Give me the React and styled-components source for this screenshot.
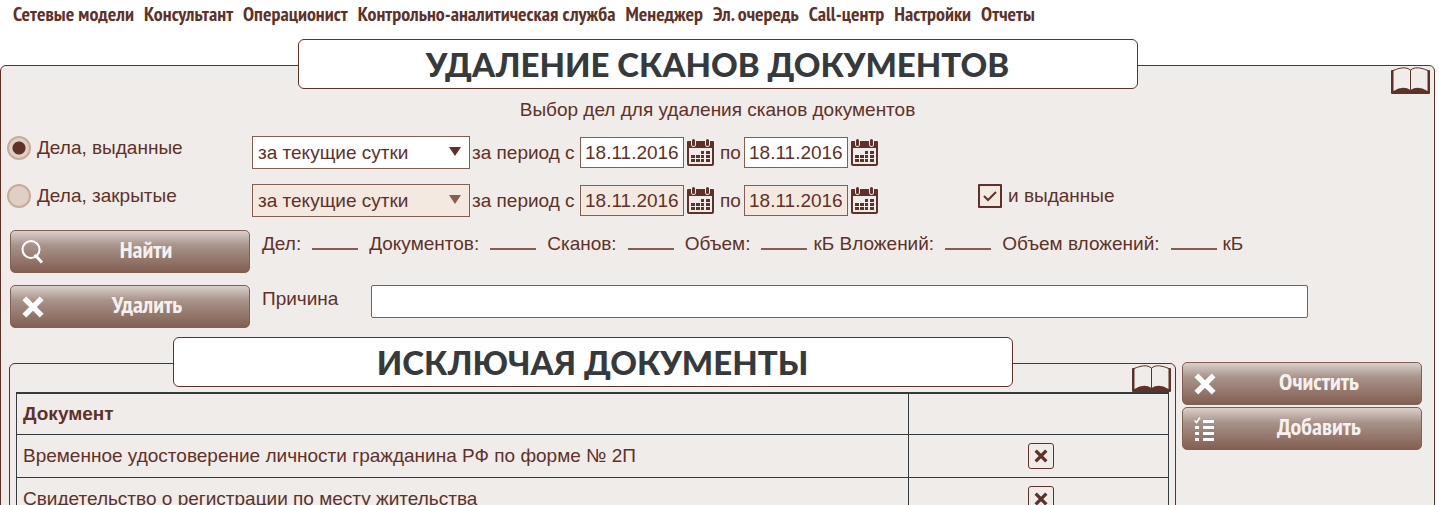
import React, { useState } from 'react';
import styled, { createGlobalStyle } from 'styled-components';

const GlobalStyle = createGlobalStyle`
  * {
    box-sizing: border-box;
  }
  body {
    margin: 0;
    background: #fff;
    color: #5e3228;
    font: 19px/24px "Liberation Sans", Arial, sans-serif;
  }
  button, input, select {
    font: inherit;
    color: inherit;
  }
`

const narrow = '"PT Sans Narrow", "Liberation Sans Narrow", "Open Sans Condensed", "Roboto Condensed", "Noto Sans", sans-serif'

const Nav = styled.nav`
  display: flex;
  flex-wrap: wrap;
  gap: 0 10px;
  padding: 2px 13px 13px;
`

const NavLink = styled.a`
  color: #5e3228;
  font: bold 20px/24px ${narrow};
  text-decoration: none;
  white-space: nowrap;
`

const Panel = styled.section`
  position: relative;
  flex: 1;
  min-width: 0;
  margin-top: 26px;
  padding: 0 6px 8px;
  background: #f0ece9;
  border: 1px solid #5e3228;
  border-radius: 6px;
`

const Page = styled(Panel)`
  margin-right: 4px;
`

const Title = styled.h2`
  max-width: 840px;
  height: 50px;
  margin: -27px auto 5px;
  background: #fff;
  border: 1px solid #5e3228;
  border-radius: 6px;
  color: #373a3c;
  font: 900 33px/48px Lato, sans-serif;
  text-align: center;
  text-transform: uppercase;
`

const HelpButton = styled.button`
  position: absolute;
  top: 1px;
  right: 4px;
  display: flex;
  padding: 0;
  border: 0;
  background: none;
`

const Subtitle = styled.p`
  margin: 9px 0 14px;
  text-align: center;
`

const Filters = styled.div`
  display: flex;
  flex-direction: column;
  gap: 15px;
  margin-bottom: 13px;
`

const FilterRow = styled.div`
  display: flex;
  align-items: flex-start;
  height: 33px;
`

const Choice = styled.label`
  display: flex;
  gap: 6px;
  width: ${props => props.$width || 'auto'};
`

const Radio = styled.input`
  appearance: none;
  width: 24px;
  height: 24px;
  margin: 0;
  border: 2px solid #c7ac9c;
  border-radius: 50%;
  background: #dfcfc4;
  &:checked {
    background: radial-gradient(circle, #5e3228 6px, #dfcfc4 7px);
  }
`

const Period = styled.div`
  display: flex;
  align-items: center;
  height: 33px;
  margin-right: 94px;
`

const Word = styled.span`
  min-width: ${props => props.$width};
`

const SelectBox = styled.div`
  position: relative;
  width: 218px;
  margin-right: 2px;
  svg {
    position: absolute;
    top: 11px;
    right: 9px;
    pointer-events: none;
    opacity: ${props => (props.$off ? 0.75 : 1)};
  }
`

const Select = styled.select`
  appearance: none;
  display: block;
  width: 100%;
  height: 33px;
  padding: 0 5px;
  border: 1px solid #835f52;
  border-radius: 0;
  background: #fff;
  opacity: 1;
  &:disabled {
    background: #f4e9e0;
  }
`

const DateInput = styled.input`
  width: 104px;
  height: 31px;
  margin: 0 3px;
  padding: 0 4px;
  border: 1px solid #835f52;
  background: #fff;
  &:disabled {
    background: #f4e9e0;
  }
`

const CalendarButton = styled.button`
  display: flex;
  margin-right: 6px;
  padding: 0;
  border: 0;
  background: none;
`

const CheckBox = styled.span`
  position: relative;
  display: flex;
  svg {
    position: absolute;
    top: 6px;
    left: 5px;
    pointer-events: none;
  }
  input {
    appearance: none;
    width: 24px;
    height: 24px;
    margin: 0;
    border: 2px solid #5e3228;
    border-radius: 1px;
    background: #f4e9e0;
  }
`

const ActionRow = styled.div`
  display: flex;
  align-items: flex-start;
  gap: 12px;
  margin: 0 3px 12px;
`

const Button = styled.button`
  display: flex;
  flex: none;
  align-items: center;
  width: 240px;
  height: 43px;
  padding: 0 9px;
  border: 1px solid #835f52;
  border-radius: 5px;
  background: linear-gradient(#d9d0cb, #a8938a 35%, #835f52);
  color: #f5f1ef;
  font: bold 24px/24px ${narrow};
  span {
    flex: 1;
    padding: 0 0 4px 8px;
  }
`

const Stats = styled.div`
  display: flex;
  flex-wrap: wrap;
  padding-top: 2px;
`

const Stat = styled.span`
  white-space: nowrap;
  margin-right: 11px;
`

const Value = styled.output`
  width: 46px;
  height: 18px;
  margin-right: ${props => (props.$unit ? '6px' : '11px')};
  border-bottom: 2px solid #835f52;
`

const Reason = styled.label`
  display: flex;
  flex: 1;
  margin-right: 117px;
  span {
    width: 109px;
    padding-top: 2px;
  }
  input {
    flex: 1;
    min-width: 0;
    height: 33px;
    padding: 0 5px;
    border: 1px solid #835f52;
    border-radius: 2px;
    background: #fff;
  }
`

const Lower = styled.div`
  display: flex;
  align-items: flex-start;
  gap: 6px;
  margin: -3px 6px 0 2px;
`

const SideButtons = styled.div`
  display: flex;
  flex-direction: column;
  gap: 2px;
  margin-top: 25px;
`

const Table = styled.table`
  width: 100%;
  border-collapse: collapse;
  border: 1px solid #373a3c;
  border-top-width: 2px;
  th, td {
    height: 43px;
    padding: 0 6px;
    border: 1px solid #373a3c;
    text-align: left;
  }
  th {
    height: 41px;
    border-top-width: 2px;
  }
  th:last-child, td:last-child {
    width: 260px;
    padding-left: 10px;
  }
`

const RemoveButton = styled.button`
  display: flex;
  align-items: center;
  justify-content: center;
  width: 26px;
  height: 26px;
  margin: 0 auto;
  padding: 0;
  border: 1px solid #5e3228;
  border-radius: 3px;
  background: #f0ece9;
`

const BookIcon = () => (
  <svg width="39" height="27" viewBox="0 0 39 27">
    <path d="M0 4Q0 3 1 3H38Q39 3 39 4V26Q39 27 38 27H1Q0 27 0 26Z" fill="#5e3228" />
    <path d="M2.5 24V3.5Q6 2 8 1.500Q15-.5 19.500 3Q24-.5 31 1.500Q33 2 36.500 3.500V24Q27 18 19.500 23Q12 18 2.500 24Z" fill="#f0ece9" />
    <path d="M2 3.500Q6 2 8 1.500Q15-.5 19.500 3Q24-.5 31 1.500Q33 2 37 3.500M19.500 3V24" fill="none" stroke="#5e3228" />
  </svg>
)

const CalendarIcon = () => (
  <svg width="27" height="27" viewBox="0 0 27 27">
    <rect x="1" y="4" width="25" height="22" rx="1" fill="#f0ece9" stroke="#5e3228" strokeWidth="2" />
    <path d="M0 3Q0 2 1 2H26Q27 2 27 3V9H0Z" fill="#5e3228" />
    <path d="M4 1H5V5Q5 7 6.500 7T8 5V1H9V5Q9 8 6.500 8T4 5ZM18 1H19V5Q19 7 20.500 7T22 5V1H23V5Q23 8 20.500 8T18 5Z" fill="#f0ece9" />
    <path d="M5 1.500Q5 0 6.500 0T8 1.500V5Q8 7 6.500 7T5 5ZM19 1.500Q19 0 20.500 0T22 1.500V5Q22 7 20.500 7T19 5Z" fill="#5e3228" />
    <path d="M14 12h3v3h-3zM19 12h4v3h-4zM4 16h4v3H4zM9 16h4v3H9zM14 16h3v3h-3zM19 16h4v3h-4zM4 20h4v3H4zM9 20h4v3H9zM14 20h3v3h-3zM19 20h4v3h-4z" fill="#5e3228" />
  </svg>
)

const SearchIcon = () => (
  <svg width="24" height="24" viewBox="0 0 24 24" fill="none" stroke="#fff">
    <circle cx="11" cy="9.500" r="8.500" strokeWidth="2" />
    <path d="M14.500 17L17 15M15.500 15.500L22 22.500" strokeWidth="3" />
  </svg>
)

const CrossIcon = ({ size = 26, color = '#fff' }) => (
  <svg width={size} height={size} viewBox="0 0 24 24">
    <path d="M4 4L20 20M20 4L4 20" stroke={color} strokeWidth="5" />
  </svg>
)

const ListIcon = () => (
  <svg width="26" height="24" viewBox="0 0 26 24">
    <path d="M11 3h11v3H11zM11 9h11v3H11zM11 15h11v3H11zM11 21h11v3H11zM3 9h4v3H3zM3 15h4v3H3zM3 21h4v3H3z" fill="#fff" />
    <path d="M2.500 3.500L4.500 5.500L8 0.500" fill="none" stroke="#fff" strokeWidth="1.500" />
  </svg>
)

const links = [
  'Сетевые модели',
  'Консультант',
  'Операционист',
  'Контрольно-аналитическая служба',
  'Менеджер',
  'Эл. очередь',
  'Call-центр',
  'Настройки',
  'Отчеты',
]

const stats = [
  { name: 'Дел:' },
  { name: 'Документов:' },
  { name: 'Сканов:' },
  { name: 'Объем:', unit: true },
  { name: 'кБ Вложений:' },
  { name: 'Объем вложений:', unit: true },
]

const documents = [
  'Временное удостоверение личности гражданина РФ по форме № 2П',
  'Свидетельство о регистрации по месту жительства',
]

const Filter = ({ label, value, kind, onPick, children }) => {
  const off = kind !== value
  return (
    <FilterRow>
      <Choice $width="245px">
        <Radio type="radio" name="kind" checked={!off} onChange={() => onPick(value)} />
        {label}
      </Choice>
      <Period>
        <SelectBox $off={off}>
          <Select aria-label="Период" disabled={off}>
            <option>за текущие сутки</option>
          </Select>
          <svg width="12" height="9" viewBox="0 0 12 9">
            <path d="M0 0H12L6 9Z" fill="#5e3228" />
          </svg>
        </SelectBox>
        <Word $width="105px">за период с</Word>
        <DateInput aria-label="Начало периода" defaultValue="18.11.2016" disabled={off} />
        <CalendarButton type="button" aria-label="Календарь"><CalendarIcon /></CalendarButton>
        <Word $width="21px">по</Word>
        <DateInput aria-label="Конец периода" defaultValue="18.11.2016" disabled={off} />
        <CalendarButton type="button" aria-label="Календарь"><CalendarIcon /></CalendarButton>
      </Period>
      {children}
    </FilterRow>
  )
}

const App = () => {
  const [kind, setKind] = useState('issued')
  const [withIssued, setWithIssued] = useState(true)

  return (
    <>
      <GlobalStyle />
      <Nav>
        {links.map(link => <NavLink href="#" key={link}>{link}</NavLink>)}
      </Nav>
      <Page>
        <Title>Удаление сканов документов</Title>
        <HelpButton type="button" aria-label="Справка"><BookIcon /></HelpButton>
        <Subtitle>Выбор дел для удаления сканов документов</Subtitle>
        <Filters>
          <Filter label="Дела, выданные" value="issued" kind={kind} onPick={setKind} />
          <Filter label="Дела, закрытые" value="closed" kind={kind} onPick={setKind}>
            <Choice>
              <CheckBox>
                <input type="checkbox" checked={withIssued} onChange={() => setWithIssued(!withIssued)} />
                {withIssued && (
                  <svg width="14" height="12" viewBox="0 0 14 12">
                    <path d="M1 6L5 10L13 2" fill="none" stroke="#5e3228" strokeWidth="2" />
                  </svg>
                )}
              </CheckBox>
              и выданные
            </Choice>
          </Filter>
        </Filters>
        <ActionRow>
          <Button type="button"><SearchIcon /><span>Найти</span></Button>
          <Stats>
            {stats.map(({ name, unit }) => (
              <React.Fragment key={name}>
                <Stat>{name}</Stat>
                <Value aria-label={name} $unit={unit} />
              </React.Fragment>
            ))}
            кБ
          </Stats>
        </ActionRow>
        <ActionRow>
          <Button type="button"><CrossIcon /><span>Удалить</span></Button>
          <Reason>
            <span>Причина</span>
            <input type="text" />
          </Reason>
        </ActionRow>
        <Lower>
          <Panel>
            <Title>Исключая документы</Title>
            <HelpButton type="button" aria-label="Справка"><BookIcon /></HelpButton>
            <Table>
              <thead>
                <tr>
                  <th>Документ</th>
                  <th />
                </tr>
              </thead>
              <tbody>
                {documents.map(name => (
                  <tr key={name}>
                    <td>{name}</td>
                    <td>
                      <RemoveButton type="button" aria-label="Убрать">
                        <CrossIcon size={16} color="#5e3228" />
                      </RemoveButton>
                    </td>
                  </tr>
                ))}
              </tbody>
            </Table>
          </Panel>
          <SideButtons>
            <Button type="button"><CrossIcon /><span>Очистить</span></Button>
            <Button type="button"><ListIcon /><span>Добавить</span></Button>
          </SideButtons>
        </Lower>
      </Page>
    </>
  )
}

export default App;
